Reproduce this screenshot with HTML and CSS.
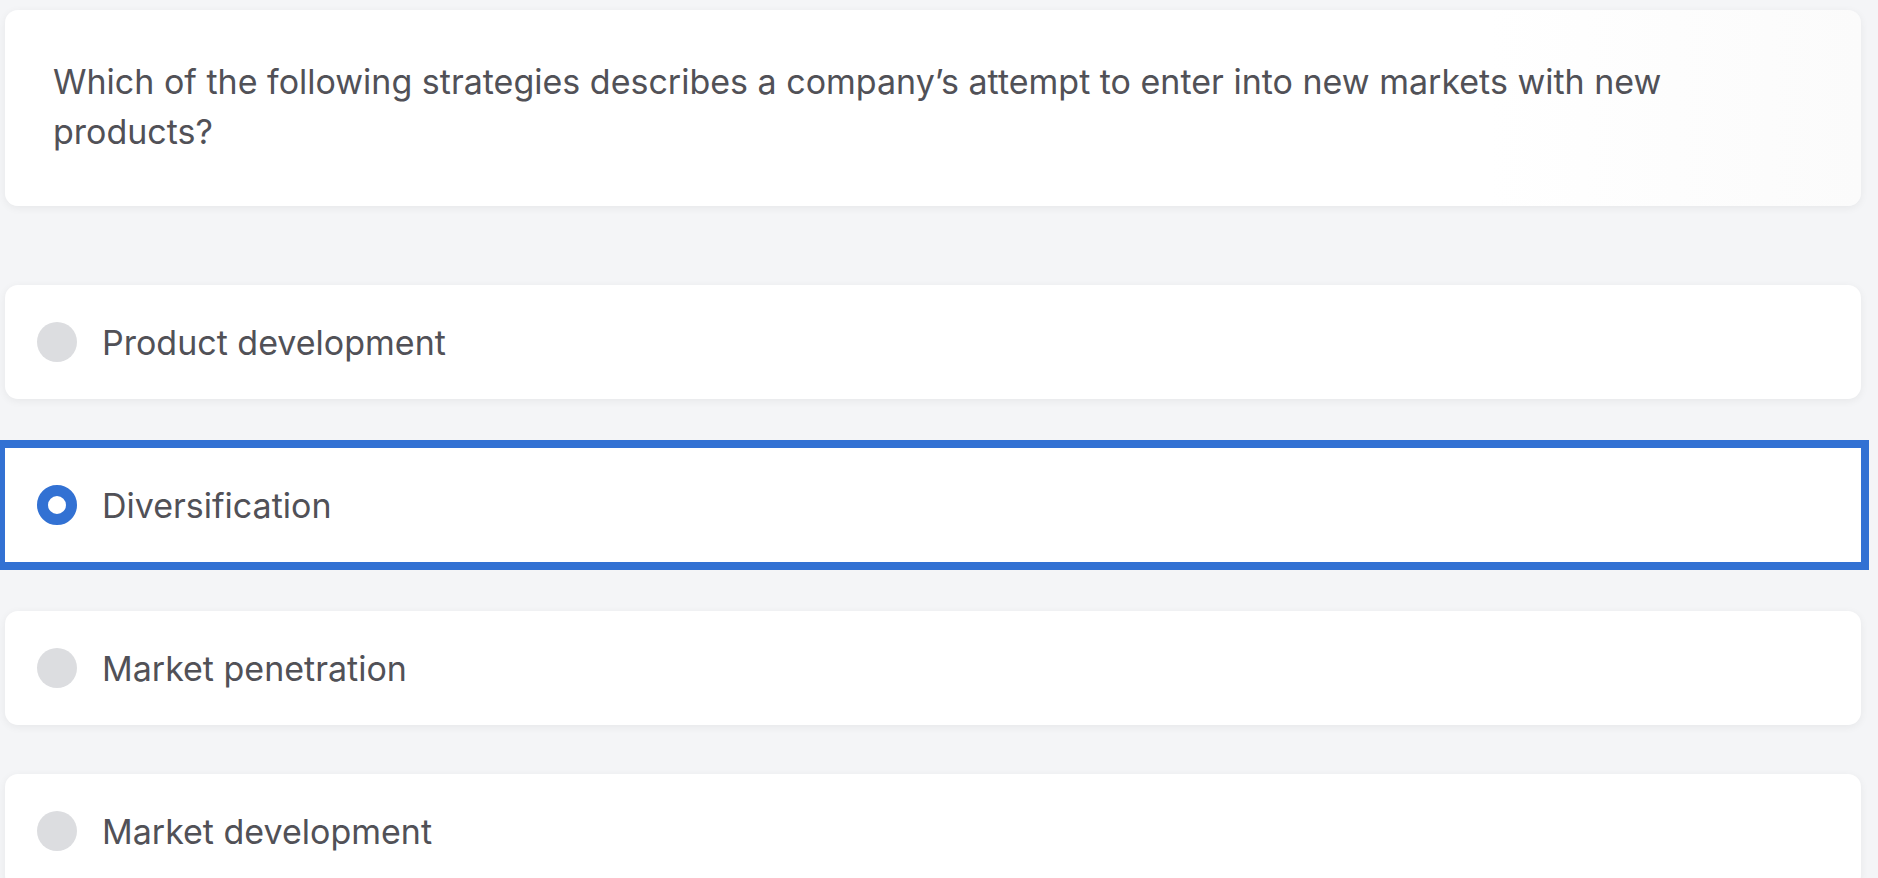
FILE: index.html
```html
<!DOCTYPE html>
<html lang="en">
<head>
<meta charset="utf-8">
<title>Quiz</title>
<link rel="stylesheet" href="styles.css">
</head>
<body>
<main class="quiz">
  <section class="question-card">
    <p class="question-text">Which of the following strategies describes a company’s attempt to enter into new markets with new products?</p>
  </section>
  <ul class="options">
    <li class="option"><span class="radio"></span><span class="option-label">Product development</span></li>
    <li class="option option-selected"><span class="radio radio-checked"></span><span class="option-label">Diversification</span></li>
    <li class="option"><span class="radio"></span><span class="option-label">Market penetration</span></li>
    <li class="option"><span class="radio"></span><span class="option-label">Market development</span></li>
  </ul>
</main>
</body>
</html>
```
FILE: styles.css
```css
html, body {
  margin: 0;
  padding: 0;
}
body {
  background: #f4f5f7;
  font-family: Inter, "Noto Sans", Roboto, sans-serif;
  color: #515157;
  overflow: hidden;
}
.quiz {
  padding: 10px 17px 0 5px;
  display: flex;
  flex-direction: column;
}
.question-card {
  background: linear-gradient(90deg, #ffffff 80%, #fbfbfb 100%);
  border-radius: 13px;
  box-shadow: 0 2px 8px rgba(0, 0, 0, 0.06);
  height: 196px;
  box-sizing: border-box;
  padding: 47px 48px 0 48px;
}
.question-text {
  margin: 0;
  font-size: 34px;
  line-height: 50px;
  max-width: 1700px;
}
.options {
  list-style: none;
  margin: 79px 0 0;
  padding: 0;
  display: flex;
  flex-direction: column;
  gap: 49px;
}
.option {
  background: #ffffff;
  border-radius: 13px;
  box-shadow: 0 2px 8px rgba(0, 0, 0, 0.06);
  height: 114px;
  display: flex;
  align-items: center;
  padding-left: 32px;
  gap: 25px;
}
.option-selected {
  border-radius: 0;
  outline: 8px solid #3271d3;
}
.radio {
  width: 40px;
  height: 40px;
  border-radius: 50%;
  background: #dcdde0;
  box-sizing: border-box;
  flex: none;
}
.radio-checked {
  background: #ffffff;
  border: 11px solid #3271d3;
}
.option-label {
  font-size: 34px;
  line-height: 40px;
  padding-top: 1px;
}
```
